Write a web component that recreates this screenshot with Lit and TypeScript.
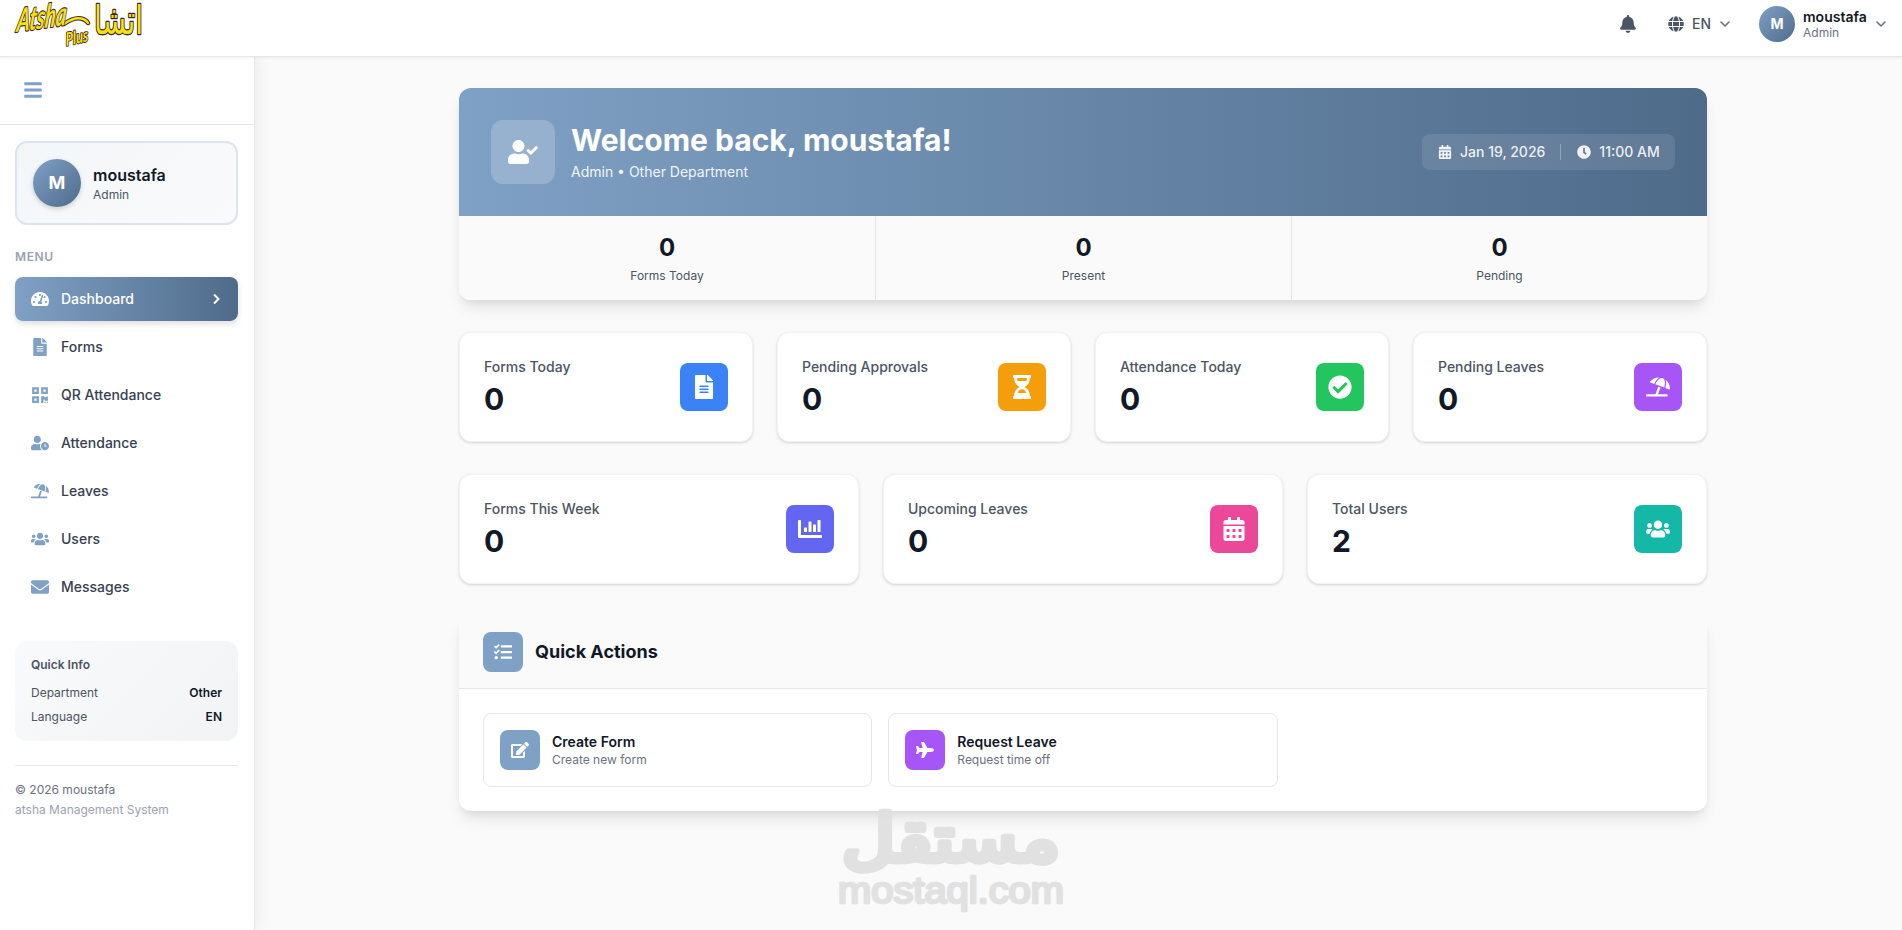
import { LitElement, html, css } from "lit";
import { customElement, property } from "lit/decorators.js";

const calCells = [64, 192, 320]
  .flatMap((x) => [256, 384].map((y) => `M${x + 12} ${y}h40c6.6 0 12 5.4 12 12v40c0 6.6-5.4 12-12 12h-40c-6.6 0-12-5.4-12-12v-40c0-6.6 5.4-12 12-12z`))
  .join("");

const ICONS: Record<string, [number, string]> = {
  bars: [448, "M16 132h416c8.8 0 16-7.2 16-16V76c0-8.800-7.200-16-16-16H16C7.200 60 0 67.200 0 76v40c0 8.800 7.200 16 16 16zm0 160h416c8.800 0 16-7.200 16-16v-40c0-8.800-7.200-16-16-16H16c-8.800 0-16 7.200-16 16v40c0 8.800 7.200 16 16 16zm0 160h416c8.800 0 16-7.200 16-16v-40c0-8.800-7.200-16-16-16H16c-8.800 0-16 7.200-16 16v40c0 8.800 7.200 16 16 16z"],
  bell: [448, "M224 512c35.32 0 63.97-28.65 63.97-64H160.03c0 35.35 28.65 64 63.97 64zm215.39-149.71c-19.32-20.76-55.47-51.99-55.47-154.29 0-77.7-54.48-139.9-127.94-155.16V32c0-17.67-14.32-32-31.98-32s-31.98 14.33-31.98 32v20.84C118.56 68.1 64.08 130.3 64.08 208c0 102.3-36.15 133.53-55.47 154.29-6 6.45-8.66 14.16-8.61 21.71.11 16.4 12.98 32 32.1 32h383.8c19.12 0 32-15.6 32.1-32 .05-7.55-2.61-15.27-8.61-21.71z"],
  globe: [496, "M336.5 160C322 70.7 287.8 8 248 8s-74 62.7-88.5 152h177zM152 256c0 22.2 1.2 43.5 3.3 64h185.3c2.1-20.5 3.3-41.8 3.3-64s-1.2-43.5-3.3-64H155.3c-2.1 20.5-3.3 41.8-3.3 64zm324.7-96c-28.6-67.9-86.5-120.4-158-141.6 24.4 33.8 41.2 84.7 50 141.6h108zM177.2 18.4C105.8 39.6 47.8 92.1 19.3 160h108c8.7-56.9 25.5-107.8 49.9-141.6zM487.4 192H372.7c2.1 21 3.3 42.5 3.3 64s-1.2 43-3.3 64h114.6c5.5-20.5 8.6-41.8 8.6-64s-3.1-43.5-8.5-64zM120 256c0-21.5 1.2-43 3.3-64H8.6C3.2 212.5 0 233.8 0 256s3.2 43.5 8.6 64h114.6c-2-21-3.2-42.5-3.2-64zm39.5 96c14.5 89.3 48.7 152 88.5 152s74-62.7 88.5-152h-177zm159.3 141.600c71.4-21.2 129.4-73.7 158-141.6h-108c-8.8 56.9-25.6 107.800-50 141.600zM19.3 352c28.6 67.9 86.5 120.4 158 141.600-24.4-33.8-41.2-84.700-50-141.600h-108z"],
  gauge: [576, "M288 32C128.94 32 0 160.94 0 320c0 52.8 14.25 102.26 39.06 144.8 5.61 9.62 16.3 15.2 27.44 15.2h443c11.14 0 21.83-5.58 27.44-15.2C561.75 422.26 576 372.8 576 320c0-159.06-128.94-288-288-288zm0 64c14.71 0 26.58 10.13 30.32 23.65-1.11 2.26-2.64 4.23-3.45 6.67l-9.22 27.67c-5.13 3.49-10.97 6.01-17.64 6.01-17.67 0-32-14.33-32-32S270.33 96 288 96zM96 384c-17.67 0-32-14.33-32-32s14.33-32 32-32 32 14.33 32 32-14.33 32-32 32zm48-160c-17.67 0-32-14.33-32-32s14.33-32 32-32 32 14.33 32 32-14.33 32-32 32zm246.77-72.41l-61.33 184C343.13 347.33 352 364.54 352 384c0 11.72-3.38 22.55-8.88 32H232.88c-5.5-9.45-8.88-20.28-8.88-32 0-33.94 26.5-61.43 59.9-63.59l61.34-184.01c4.17-12.56 17.73-19.45 30.36-15.17 12.57 4.19 19.35 17.79 15.17 30.36zm14.66 57.2l15.52-46.55c3.47-1.29 7.13-2.23 11.05-2.23 17.67 0 32 14.33 32 32s-14.33 32-32 32c-11.38-.01-20.89-6.28-26.57-15.22zM480 384c-17.67 0-32-14.33-32-32s14.33-32 32-32 32 14.33 32 32-14.33 32-32 32z"],
  file: [384, "M224 136V0H24C10.7 0 0 10.7 0 24v464c0 13.3 10.7 24 24 24h336c13.3 0 24-10.7 24-24V160H248c-13.2 0-24-10.8-24-24zm64 236c0 6.6-5.4 12-12 12H108c-6.6 0-12-5.4-12-12v-8c0-6.6 5.4-12 12-12h168c6.6 0 12 5.4 12 12v8zm0-64c0 6.6-5.4 12-12 12H108c-6.6 0-12-5.4-12-12v-8c0-6.6 5.4-12 12-12h168c6.6 0 12 5.4 12 12v8zm0-72v8c0 6.6-5.4 12-12 12H108c-6.6 0-12-5.4-12-12v-8c0-6.6 5.4-12 12-12h168c6.6 0 12 5.4 12 12zm96-114.1v6.1H256V0h6.1c6.4 0 12.5 2.5 17 7l97.9 98c4.5 4.5 7 10.6 7 16.9z"],
  qr: [448, "M0 224h192V32H0v192zM64 96h64v64H64V96zm192-64v192h192V32H256zm128 128h-64V96h64v64zM0 480h192V288H0v192zm64-128h64v64H64v-64zm352-64h32v128h-96v-32h-32v96h-64V288h96v32h64v-32zm0 160h32v32h-32v-32zm-64 0h32v32h-32v-32z"],
  userClock: [640, "M496 224c-79.6 0-144 64.4-144 144s64.4 144 144 144 144-64.4 144-144-64.4-144-144-144zm64 150.3c0 5.3-4.4 9.7-9.7 9.7h-60.6c-5.3 0-9.7-4.4-9.7-9.7v-76.6c0-5.3 4.4-9.7 9.7-9.7h12.6c5.3 0 9.7 4.4 9.7 9.7V352h38.3c5.3 0 9.7 4.4 9.7 9.7v12.6zM320 368c0-27.8 6.7-54.1 18.2-77.5-8-1.5-16.2-2.5-24.6-2.5h-16.7c-22.2 10.2-46.9 16-72.9 16s-50.6-5.8-72.9-16h-16.7C60.2 288 0 348.2 0 422.4V464c0 26.5 21.5 48 48 48h347.1c-45.3-31.9-75.1-84.5-75.1-144zm-96-112c70.7 0 128-57.3 128-128S294.7 0 224 0 96 57.3 96 128s57.3 128 128 128z"],
  userCheck: [640, "M224 256c70.7 0 128-57.3 128-128S294.7 0 224 0 96 57.3 96 128s57.3 128 128 128zm89.6 32h-16.7c-22.2 10.2-46.9 16-72.9 16s-50.6-5.8-72.9-16h-16.7C60.2 288 0 348.2 0 422.4V464c0 26.5 21.5 48 48 48h352c26.5 0 48-21.5 48-48v-41.6c0-74.2-60.2-134.4-134.4-134.4zm323-128.4l-27.800-28.1c-4.6-4.700-12.1-4.700-16.800-.1l-104.800 104-45.500-45.800c-4.600-4.700-12.100-4.700-16.800-.1l-28.100 27.900c-4.700 4.600-4.700 12.100-.1 16.800l81.700 82.300c4.600 4.700 12.100 4.700 16.800.1l141.300-140.200c4.600-4.700 4.700-12.200.1-16.800z"],
  beach: [640, "M115.38 136.9l102.11 37.18c35.19-81.54 86.21-144.29 139-173.7-95.88-4.89-188.78 36.96-248.53 111.8-6.69 8.4-2.66 21.05 7.42 24.72zm132.25 48.16l238.48 86.83c35.76-121.38 18.7-231.66-42.63-253.98-7.4-2.7-15.13-4-23.09-4-58.02.01-128.27 69.17-172.76 171.15zM521.48 60.5c6.22 16.3 10.83 34.6 13.2 55.19 5.74 49.89-1.42 108.23-18.95 166.98l102.62 37.36c10.09 3.67 21.31-3.43 21.57-14.17 2.32-95.69-41.91-187.44-118.44-245.36zM560 447.98H321.06L386 269.5l-60.14-21.9-72.9 200.37H16c-8.84 0-16 7.16-16 16.01v32.01C0 504.83 7.16 512 16 512h544c8.84 0 16-7.17 16-16.01v-32.01c0-8.84-7.16-16-16-16z"],
  users: [640, "M96 224c35.3 0 64-28.7 64-64s-28.7-64-64-64-64 28.7-64 64 28.7 64 64 64zm448 0c35.3 0 64-28.7 64-64s-28.7-64-64-64-64 28.7-64 64 28.7 64 64 64zm32 32h-64c-17.6 0-33.5 7.1-45.1 18.6 40.3 22.1 68.9 62 75.1 109.4h66c17.7 0 32-14.3 32-32v-32c0-35.3-28.7-64-64-64zm-256 0c61.9 0 112-50.1 112-112S381.9 32 320 32 208 82.1 208 144s50.1 112 112 112zm76.8 32h-8.3c-20.8 10-43.9 16-68.5 16s-47.6-6-68.5-16h-8.3C179.6 288 128 339.6 128 403.2V432c0 26.5 21.5 48 48 48h288c26.5 0 48-21.5 48-48v-28.8c0-63.6-51.6-115.2-115.2-115.2zm-223.7-13.4C161.5 263.1 145.6 256 128 256H64c-35.3 0-64 28.7-64 64v32c0 17.7 14.3 32 32 32h65.9c6.3-47.4 34.9-87.3 75.2-109.4z"],
  mail: [512, "M502.3 190.8c3.9-3.1 9.7-.2 9.7 4.7V400c0 26.5-21.5 48-48 48H48c-26.5 0-48-21.5-48-48V195.6c0-5 5.7-7.8 9.7-4.7 22.4 17.4 52.1 39.5 154.1 113.6 21.1 15.4 56.7 47.8 92.2 47.6 35.7.3 72-32.8 92.3-47.6 102-74.1 131.6-96.3 154-113.7zM256 320c23.2.4 56.6-29.2 73.4-41.4 132.7-96.3 142.8-104.7 173.4-128.7 5.8-4.5 9.2-11.5 9.2-18.9v-19c0-26.5-21.5-48-48-48H48c-26.5 0-48 21.5-48 48v19c0 7.4 3.4 14.3 9.2 18.9 30.6 23.9 40.7 32.4 173.4 128.7 16.8 12.2 50.2 41.8 73.4 41.4z"],
  calendar: [448, "M0 464c0 26.5 21.5 48 48 48h352c26.5 0 48-21.5 48-48V192H0v272z" + calCells + "M400 64h-48V16c0-8.8-7.2-16-16-16h-32c-8.8 0-16 7.2-16 16v48H160V16c0-8.8-7.2-16-16-16h-32c-8.8 0-16 7.2-16 16v48H48C21.5 64 0 85.5 0 112v48h448v-48c0-26.5-21.5-48-48-48z"],
  clock: [512, "M256,8C119,8,8,119,8,256S119,504,256,504,504,393,504,256,393,8,256,8Zm92.49,313h0l-20,25a16,16,0,0,1-22.49,2.5h0l-67-49.72a40,40,0,0,1-15-31.23V112a16,16,0,0,1,16-16h32a16,16,0,0,1,16,16V256l58,42.5A16,16,0,0,1,348.49,321Z"],
  hourglass: [384, "M360 0H24C10.745 0 0 10.745 0 24v16c0 13.255 10.745 24 24 24 0 90.965 51.016 167.734 120.842 192C75.016 280.266 24 357.035 24 448c-13.255 0-24 10.745-24 24v16c0 13.255 10.745 24 24 24h336c13.255 0 24-10.745 24-24v-16c0-13.255-10.745-24-24-24 0-90.965-51.016-167.734-120.842-192C308.984 231.734 360 154.965 360 64c13.255 0 24-10.745 24-24V24c0-13.255-10.745-24-24-24zm-75.078 384H99.08c17.059-46.797 52.096-80 92.92-80 40.821 0 75.862 33.196 92.922 80zm.019-256H99.078C91.988 108.548 88 86.748 88 64h208c0 22.805-3.987 44.587-11.059 64z"],
  check: [512, "M504 256c0 136.967-111.033 248-248 248S8 392.967 8 256 119.033 8 256 8s248 111.033 248 248zM227.314 387.314l184-184c6.248-6.248 6.248-16.379 0-22.627l-22.627-22.627c-6.248-6.249-16.379-6.249-22.628 0L216 308.118l-70.059-70.059c-6.248-6.248-16.379-6.248-22.628 0l-22.627 22.627c-6.248 6.248-6.248 16.379 0 22.627l104 104c6.249 6.249 16.379 6.249 22.628.001z"],
  chart: [512, "M332.8 320h38.4c6.4 0 12.8-6.4 12.8-12.8V172.8c0-6.4-6.4-12.8-12.8-12.8h-38.4c-6.4 0-12.8 6.4-12.8 12.8v134.4c0 6.4 6.4 12.8 12.8 12.8zm96 0h38.4c6.4 0 12.8-6.4 12.8-12.8V76.8c0-6.4-6.4-12.8-12.8-12.8h-38.4c-6.4 0-12.8 6.4-12.8 12.8v230.4c0 6.4 6.4 12.8 12.8 12.8zm-288 0h38.4c6.4 0 12.8-6.4 12.8-12.8v-70.4c0-6.4-6.4-12.8-12.8-12.8h-38.4c-6.4 0-12.8 6.4-12.8 12.8v70.4c0 6.4 6.4 12.8 12.8 12.8zm96 0h38.4c6.4 0 12.8-6.4 12.8-12.8V108.8c0-6.4-6.4-12.8-12.8-12.8h-38.4c-6.4 0-12.8 6.4-12.8 12.8v198.4c0 6.4 6.4 12.8 12.8 12.8zM496 384H64V80c0-8.84-7.16-16-16-16H16C7.16 64 0 71.16 0 80v336c0 17.67 14.33 32 32 32h464c8.84 0 16-7.16 16-16v-32c0-8.84-7.16-16-16-16z"],
  tasks: [512, "M139.61 35.5a12 12 0 0 0-17 0L58.93 98.81l-22.7-22.12a12 12 0 0 0-17 0L3.53 92.41a12 12 0 0 0 0 17l47.59 47.4a12.78 12.78 0 0 0 17.61 0l15.59-15.62L156.52 69a12.09 12.09 0 0 0 .09-17zm0 159.19a12 12 0 0 0-17 0l-63.68 63.72-22.7-22.1a12 12 0 0 0-17 0L3.53 252a12 12 0 0 0 0 17L51 316.5a12.77 12.77 0 0 0 17.6 0l15.7-15.69 72.2-72.22a12 12 0 0 0 .09-16.9zM64 368c-26.49 0-48.59 21.5-48.59 48S37.53 464 64 464a48 48 0 0 0 0-96zm432 16H208a16 16 0 0 0-16 16v32a16 16 0 0 0 16 16h288a16 16 0 0 0 16-16v-32a16 16 0 0 0-16-16zm0-320H208a16 16 0 0 0-16 16v32a16 16 0 0 0 16 16h288a16 16 0 0 0 16-16V80a16 16 0 0 0-16-16zm0 160H208a16 16 0 0 0-16 16v32a16 16 0 0 0 16 16h288a16 16 0 0 0 16-16v-32a16 16 0 0 0-16-16z"],
  edit: [576, "M402.6 83.2l90.2 90.2c3.8 3.8 3.8 10 0 13.8L274.4 405.6l-92.8 10.3c-12.4 1.4-22.9-9.1-21.5-21.5l10.3-92.8L388.8 83.2c3.8-3.8 10-3.8 13.8 0zm162-22.9l-48.8-48.8c-15.2-15.2-39.9-15.2-55.2 0l-35.4 35.4c-3.8 3.8-3.8 10 0 13.8l90.2 90.2c3.8 3.8 10 3.8 13.8 0l35.4-35.4c15.2-15.3 15.2-40 0-55.2zM384 346.2V448H64V128h229.8c3.2 0 6.2-1.3 8.5-3.5l40-40c7.6-7.6 2.2-20.5-8.5-20.5H48C21.5 64 0 85.5 0 112v352c0 26.5 21.5 48 48 48h352c26.5 0 48-21.5 48-48V306.2c0-10.7-12.9-16-20.5-8.5l-40 40c-2.2 2.3-3.5 5.3-3.5 8.5z"],
  plane: [576, "M480 192H365.71L260.61 8.06A16.014 16.014 0 0 0 246.71 0h-65.5c-10.63 0-18.3 10.17-15.38 20.39L214.86 192H112l-43.2-57.6c-3.02-4.03-7.77-6.4-12.8-6.4H16.01C5.6 128-2.04 137.78.49 147.88L32 256 .49 364.12C-2.04 374.22 5.6 384 16.01 384H56c5.04 0 9.78-2.37 12.8-6.4L112 320h102.86l-49.03 171.6c-2.92 10.22 4.75 20.4 15.38 20.4h65.5c5.74 0 11.04-3.08 13.89-8.06L365.71 320H480c35.35 0 96-28.65 96-64s-60.65-64-96-64z"],
};

@customElement("ui-icon")
class UiIcon extends LitElement {
  @property() name = "";
  static styles = css`
    :host { display: block; flex: none; width: 18px; height: 18px; }
    .glyph { display: block; width: 100%; height: 100%; fill: currentColor; }
  `;
  render() {
    const [w, d] = ICONS[this.name];
    return html`<svg class="glyph" viewBox="0 0 ${w} 512"><path fill-rule="evenodd" d=${d}></path></svg>`;
  }
}

const NAV = [
  ["gauge", "Dashboard"], ["file", "Forms"], ["qr", "QR Attendance"], ["userClock", "Attendance"],
  ["beach", "Leaves"], ["users", "Users"], ["mail", "Messages"],
];
const ROW1 = [
  ["Forms Today", "0", "file", "blue"], ["Pending Approvals", "0", "hourglass", "amber"],
  ["Attendance Today", "0", "check", "green"], ["Pending Leaves", "0", "beach", "purple"],
];
const ROW2 = [
  ["Forms This Week", "0", "chart", "indigo"], ["Upcoming Leaves", "0", "calendar", "pink"],
  ["Total Users", "2", "users", "teal"],
];

const chevronDown = html`<svg class="chev" viewBox="0 0 10 6"><path d="M1 1l4 4 4-4"></path></svg>`;

@customElement("app-root")
class AppRoot extends LitElement {
  static styles = css`
    :host { display: block; position: relative; width: 100%; height: 930px; overflow: hidden; background: #f9fafb;
      font-family: Inter, "Noto Sans", sans-serif; font-size: 14px; line-height: 20px; color: #111827; }
    * { box-sizing: border-box; }
    .page { display: flex; flex-direction: column; height: 930px; background: #fafafa; }
    .top { position: relative; z-index: 2; height: 57px; flex: none; background: #fff; border-bottom: 1px solid #e5e7eb;
      box-shadow: 0 1px 3px rgba(0,0,0,.06); display: flex; justify-content: space-between; align-items: flex-start; }
    .logo { display: block; width: 150px; height: 50px; }
    .tools { display: flex; align-items: center; height: 48px; padding-right: 16px; color: #4b5563; }
    .bell { width: 16px; margin-right: 32px; }
    .globe { width: 16px; height: 16px; margin-right: 8px; }
    .lang { font-weight: 500; color: #4b5563; width: 20px; margin-right: 8px; }
    .chev { width: 10px; height: 6px; fill: none; stroke: #6b7280; stroke-width: 1.6; stroke-linecap: round; stroke-linejoin: round; }
    .avatar { flex: none; border-radius: 50%; background: linear-gradient(135deg, #7fa1c5, #4f6b8a); color: #fff; font-weight: 700;
      display: flex; align-items: center; justify-content: center; }
    .small { width: 36px; height: 36px; margin: 0 8px 0 29px; font-size: 14px; }
    .who { margin-right: 8px; width: 65px; }
    .who-name { font-weight: 600; line-height: 17px; color: #111827; }
    .who-role { font-size: 12px; line-height: 15px; color: #6b7280; }
    .body { flex: 1; display: flex; min-height: 0; }
    .side { width: 255px; flex: none; background: #fff; border-right: 1px solid #e5e7eb; box-shadow: 2px 0 15px rgba(0,0,0,.07); z-index: 1; }
    .toggle { height: 68px; border-bottom: 1px solid #e5e7eb; padding: 23px 24px; color: #7fa1c5; }
    .toggle ui-icon { width: 18px; height: 20px; }
    .side-in { padding: 16px 16px 0 15px; }
    .user { height: 84px; border: 2px solid #dbe4f0; border-radius: 12px; background: linear-gradient(135deg, #f3f6f9, #f9fafb);
      padding: 16px; display: flex; align-items: center; gap: 12px; }
    .big { width: 48px; height: 48px; font-size: 18px; box-shadow: 0 2px 5px rgba(0,0,0,.16); }
    .user-name { font-size: 16px; font-weight: 600; line-height: 24px; }
    .user-role { font-size: 12px; line-height: 16px; color: #4b5563; }
    .cap { margin: 24px 0 12px; font-size: 12px; line-height: 16px; font-weight: 600; letter-spacing: .6px; color: #9ca3af; }
    .nav { display: flex; flex-direction: column; gap: 4px; }
    .item { height: 44px; border-radius: 8px; padding: 0 16px; display: flex; align-items: center; gap: 12px; font-weight: 500; color: #374151; }
    .item ui-icon { color: #7fa1c5; }
    .item.on { background: linear-gradient(90deg, #7fa1c5, #4f6b8a); color: #fff; box-shadow: 0 3px 6px rgba(0,0,0,.13); }
    .item.on ui-icon { color: #fff; }
    .right { width: 8px; height: 12px; margin-left: auto; margin-right: 2px; fill: none; stroke: #fff; stroke-width: 2; }
    .info { margin-top: 32px; height: 100px; border-radius: 12px; background: linear-gradient(135deg, #f9fafb, #f1f3f5); padding: 16px; font-size: 12px; color: #4b5563; }
    .info-title { font-weight: 600; line-height: 16px; margin-bottom: 8px; }
    .kv { display: flex; justify-content: space-between; line-height: 24px; }
    .kv b { font-weight: 600; color: #111827; }
    .foot { margin-top: 24px; border-top: 1px solid #e5e7eb; padding-top: 14px; font-size: 12px; color: #6b7280; }
    .foot .sub { color: #9ca3af; }
    .main { flex: 1; padding: 31px 195px 0 204px; display: flex; flex-direction: column; gap: 32px; }
    .hero, .quick { border-radius: 12px; overflow: hidden; background: #fff; box-shadow: 0 10px 15px -3px rgba(0,0,0,.1), 0 4px 6px -2px rgba(0,0,0,.06); }
    .band { height: 128px; background: linear-gradient(90deg, #7fa1c5, #4f6b8a); color: #fff; display: flex; align-items: center; padding: 0 32px; }
    .badge { width: 64px; height: 64px; border-radius: 12px; background: rgba(255,255,255,.2); display: flex; align-items: center; justify-content: center; margin-right: 16px; }
    .badge ui-icon { width: 30px; height: 24px; }
    .hello { font-size: 30px; line-height: 36px; font-weight: 700; margin: 0 0 4px; }
    .dept { color: rgba(255,255,255,.92); }
    .when { margin-left: auto; width: 253px; height: 36px; border-radius: 8px; background: rgba(255,255,255,.1); padding: 0 16px;
      display: flex; align-items: center; font-weight: 500; color: rgba(255,255,255,.9); white-space: nowrap; }
    .when ui-icon { width: 14px; height: 14px; margin-right: 8px; }
    .bar { flex: none; width: 1px; height: 16px; background: rgba(255,255,255,.3); margin: 0 16px 0 15px; }
    .trio { display: grid; grid-template-columns: repeat(3, 1fr); height: 84px; background: #fafafa; }
    .cell { text-align: center; padding-top: 16px; border-left: 1px solid #e5e7eb; }
    .cell:first-child { border-left: 0; }
    .cell-n { font-size: 24px; line-height: 32px; font-weight: 700; margin-bottom: 4px; }
    .cell-l { font-size: 12px; line-height: 16px; color: #4b5563; }
    .grid { display: grid; gap: 24px; }
    .four { grid-template-columns: repeat(4, 1fr); }
    .three { grid-template-columns: repeat(3, 1fr); }
    .card { height: 110px; border: 1px solid #f0f2f4; border-radius: 12px; background: #fff; padding: 24px; display: flex; align-items: center;
      justify-content: space-between; box-shadow: 0 1px 3px rgba(0,0,0,.12), 0 1px 2px rgba(0,0,0,.04); }
    .label { color: #4b5563; font-weight: 500; margin-bottom: 4px; }
    .num { font-size: 30px; line-height: 36px; font-weight: 700; }
    .tile { flex: none; width: 48px; height: 48px; border-radius: 8px; color: #fff; display: flex; align-items: center; justify-content: center; }
    .tile ui-icon { width: 24px; height: 24px; }
    .tile.sm { width: 40px; height: 40px; margin-right: 12px; }
    .tile.sm ui-icon { width: 18px; height: 18px; }
    .blue { background: #3b82f6; } .amber { background: #f59e0b; } .green { background: #22c55e; } .purple { background: #a855f7; }
    .indigo { background: #6366f1; } .pink { background: #ec4899; } .teal { background: #14b8a6; } .steel { background: #7fa1c5; }
    .q-head { height: 73px; padding: 0 24px; background: #fafafa; border-bottom: 1px solid #e5e7eb; display: flex; align-items: center; }
    .q-title { font-size: 18px; line-height: 28px; font-weight: 700; margin: 0; }
    .q-body { padding: 24px; display: grid; grid-template-columns: repeat(3, 1fr); gap: 16px; }
    .act { height: 74px; border: 1px solid #e5e7eb; border-radius: 8px; padding: 16px; display: flex; align-items: center; }
    .act-t { font-weight: 600; }
    .act-s { font-size: 12px; line-height: 16px; color: #6b7280; }
    .mark { position: absolute; z-index: 3; left: 820px; top: 795px; width: 260px; height: 125px; fill: #e0e0e0; stroke: #e0e0e0; opacity: .93; }
  `;

  card([label, num, icon, tone]: string[]) {
    return html`<div class="card">
      <div><div class="label">${label}</div><div class="num">${num}</div></div>
      <div class="tile ${tone}"><ui-icon name=${icon}></ui-icon></div>
    </div>`;
  }

  render() {
    return html`<div class="page">
      <header class="top">
        <svg class="logo" viewBox="0 0 150 50" fill="#f7df12" stroke="#3a2a22" stroke-linejoin="round" paint-order="stroke">
          <g fill="none" stroke-linecap="round">
            <path d="M64 24Q74 17 81 18.500Q86 19.500 88 23" stroke-width="4.500"></path>
            <path d="M64 24Q74 17 81 18.500Q86 19.500 88 23" stroke="#f7df12" stroke-width="2.400"></path>
          </g>
          <text transform="translate(16 32) rotate(-8) skewX(-14)" font-family="Lato" font-style="italic" font-weight="700" font-size="32" stroke-width="2.200" textLength="50" lengthAdjust="spacingAndGlyphs">Atsha</text>
          <text transform="translate(66 46) rotate(-12) skewX(-8)" font-family="Lato" font-style="italic" font-weight="700" font-size="18" stroke-width="1.800" textLength="23" lengthAdjust="spacingAndGlyphs">Plus</text>
          <text x="94" y="34" font-family="DejaVu Sans" font-size="40" stroke-width="2.500" textLength="49" lengthAdjust="spacingAndGlyphs">اتشا</text>
        </svg>
        <div class="tools">
          <ui-icon class="bell" name="bell"></ui-icon>
          <ui-icon class="globe" name="globe"></ui-icon>
          <span class="lang">EN</span>${chevronDown}
          <div class="avatar small">M</div>
          <div class="who"><div class="who-name">moustafa</div><div class="who-role">Admin</div></div>
          ${chevronDown}
        </div>
      </header>
      <div class="body">
        <aside class="side">
          <div class="toggle"><ui-icon name="bars"></ui-icon></div>
          <div class="side-in">
            <div class="user">
              <div class="avatar big">M</div>
              <div><div class="user-name">moustafa</div><div class="user-role">Admin</div></div>
            </div>
            <div class="cap">MENU</div>
            <nav class="nav">
              ${NAV.map(([icon, label], i) => html`<div class="item ${i === 0 ? "on" : ""}">
                <ui-icon name=${icon}></ui-icon><span>${label}</span>
                ${i === 0 ? html`<svg class="right" viewBox="0 0 8 12"><path d="M2 1.500l4.500 4.500L2 10.500"></path></svg>` : ""}
              </div>`)}
            </nav>
            <div class="info">
              <div class="info-title">Quick Info</div>
              <div class="kv"><span>Department</span><b>Other</b></div>
              <div class="kv"><span>Language</span><b>EN</b></div>
            </div>
            <div class="foot"><div>© 2026 moustafa</div><div class="sub">atsha Management System</div></div>
          </div>
        </aside>
        <main class="main">
          <section class="hero">
            <div class="band">
              <div class="badge"><ui-icon name="userCheck"></ui-icon></div>
              <div><h1 class="hello">Welcome back, moustafa!</h1><div class="dept">Admin • Other Department</div></div>
              <div class="when">
                <ui-icon name="calendar"></ui-icon><span>Jan 19, 2026</span><span class="bar"></span>
                <ui-icon name="clock"></ui-icon><span>11:00 AM</span>
              </div>
            </div>
            <div class="trio">
              ${["Forms Today", "Present", "Pending"].map((l) => html`<div class="cell"><div class="cell-n">0</div><div class="cell-l">${l}</div></div>`)}
            </div>
          </section>
          <section class="grid four">${ROW1.map((c) => this.card(c))}</section>
          <section class="grid three">${ROW2.map((c) => this.card(c))}</section>
          <section class="quick">
            <div class="q-head"><div class="tile sm steel"><ui-icon name="tasks"></ui-icon></div><h2 class="q-title">Quick Actions</h2></div>
            <div class="q-body">
              <div class="act"><div class="tile sm steel"><ui-icon name="edit"></ui-icon></div>
                <div><div class="act-t">Create Form</div><div class="act-s">Create new form</div></div></div>
              <div class="act"><div class="tile sm purple"><ui-icon name="plane"></ui-icon></div>
                <div><div class="act-t">Request Leave</div><div class="act-s">Request time off</div></div></div>
            </div>
          </section>
        </main>
      </div>
      <svg class="mark" viewBox="0 0 260 125" stroke-linejoin="round">
        <text x="22" y="66" font-family="DejaVu Sans" font-size="64" stroke-width="6.500" textLength="218" lengthAdjust="spacingAndGlyphs">مستقل</text>
        <text x="18" y="108" font-family="Liberation Sans" font-size="36" stroke-width="2.600" textLength="226" lengthAdjust="spacingAndGlyphs">mostaql.com</text>
      </svg>
    </div>`;
  }
}
